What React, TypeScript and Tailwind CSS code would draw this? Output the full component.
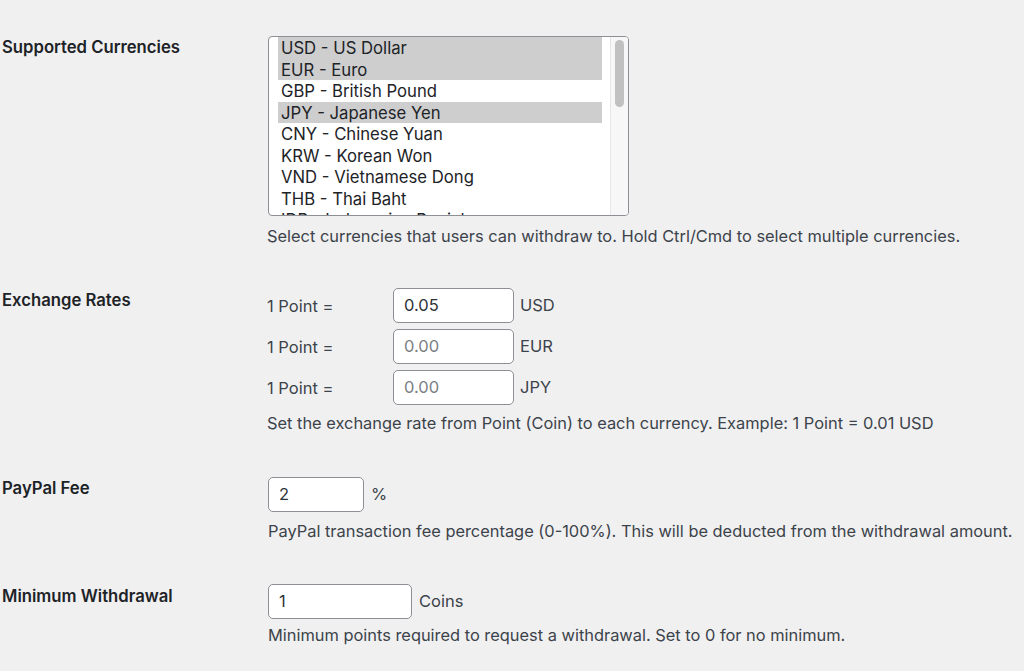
import React from "react";

const font = { fontFamily: "Inter, 'Noto Sans', sans-serif" };

const options: { label: string; selected: boolean }[] = [
  { label: "USD - US Dollar", selected: true },
  { label: "EUR - Euro", selected: true },
  { label: "GBP - British Pound", selected: false },
  { label: "JPY - Japanese Yen", selected: true },
  { label: "CNY - Chinese Yuan", selected: false },
  { label: "KRW - Korean Won", selected: false },
  { label: "VND - Vietnamese Dong", selected: false },
  { label: "THB - Thai Baht", selected: false },
  { label: "IDR - Indonesian Rupiah", selected: false },
];

function Label({ children, pt }: { children: React.ReactNode; pt: string }) {
  return (
    <div className={`w-[267px] shrink-0 pl-[2px] ${pt}`}>
      <div className="text-[16.7px] leading-[22px] font-semibold text-[#1d2327]">{children}</div>
    </div>
  );
}

function Desc({ children, mt }: { children: React.ReactNode; mt: string }) {
  return <p className={`${mt} text-[16.4px] leading-[20px] text-[#3c434a] whitespace-nowrap`}>{children}</p>;
}

function Input({ value, placeholder, w }: { value?: string; placeholder?: string; w: string }) {
  return (
    <div
      className={`${w} h-[35px] rounded-[5px] border border-[#8c8f94] bg-white px-[10px] flex items-center text-[16.5px] shrink-0`}
    >
      {value ? (
        <span className="text-[#2c3338]">{value}</span>
      ) : (
        <span className="text-[#7b7f84]">{placeholder}</span>
      )}
    </div>
  );
}

export default function App() {
  return (
    <div className="w-[1024px] h-[671px] bg-[#f0f0f1] overflow-hidden" style={font}>
      {/* Supported Currencies */}
      <div className="flex pt-[36px]">
        <Label pt="pt-0">Supported Currencies</Label>
        <div className="pl-[1px]">
          <div className="relative w-[361px] h-[180px] rounded-[4px] border border-[#8c8f94] bg-white overflow-hidden flex">
            <div className="flex-1 pl-[9px] pr-[8px] overflow-hidden">
              {options.map((o) => (
                <div
                  key={o.label}
                  className={`h-[21.5px] leading-[22.5px] pl-[3px] text-[16.7px] text-[#1d2327] whitespace-nowrap ${
                    o.selected ? "bg-[#cecece]" : ""
                  }`}
                >
                  {o.label}
                </div>
              ))}
            </div>
            <div className="w-[18px] h-full bg-[#f7f7f7] border-l border-[#e6e6e6] flex justify-center pt-[3px]">
              <div className="w-[9px] h-[67px] rounded-full bg-[#c1c1c1]" />
            </div>
          </div>
          <Desc mt="mt-[10px]">
            <span className="-ml-[1px]">
              Select currencies that users can withdraw to. Hold Ctrl/Cmd to select multiple currencies.
            </span>
          </Desc>
        </div>
      </div>

      {/* Exchange Rates */}
      <div className="flex pt-[42px]">
        <Label pt="pt-[1px]">Exchange Rates</Label>
        <div>
          <div className="flex flex-col gap-[6px]">
            {[
              { v: "0.05", c: "USD" },
              { v: "", c: "EUR" },
              { v: "", c: "JPY" },
            ].map((r) => (
              <div key={r.c} className="flex items-center">
                <span className="w-[126px] pt-[2px] text-[16.5px] text-[#3c434a]">1 Point =</span>
                <Input value={r.v} placeholder="0.00" w="w-[121px]" />
                <span className="ml-[6px] text-[16.5px] text-[#3c434a]">{r.c}</span>
              </div>
            ))}
          </div>
          <Desc mt="mt-[8px]">
            Set the exchange rate from Point (Coin) to each currency. Example: 1 Point = 0.01 USD
          </Desc>
        </div>
      </div>

      {/* PayPal Fee */}
      <div className="flex pt-[44px]">
        <Label pt="pt-0">PayPal Fee</Label>
        <div className="pl-[1px]">
          <div className="flex items-center">
            <Input value="2" w="w-[96px]" />
            <span className="ml-[7px] text-[16.5px] text-[#3c434a]">%</span>
          </div>
          <Desc mt="mt-[9px]">
            PayPal transaction fee percentage (0-100%). This will be deducted from the withdrawal amount.
          </Desc>
        </div>
      </div>

      {/* Minimum Withdrawal */}
      <div className="flex pt-[43px]">
        <Label pt="pt-[1px]">Minimum Withdrawal</Label>
        <div className="pl-[1px]">
          <div className="flex items-center">
            <Input value="1" w="w-[144px]" />
            <span className="ml-[7px] text-[16.5px] text-[#3c434a]">Coins</span>
          </div>
          <Desc mt="mt-[6px]">
            Minimum points required to request a withdrawal. Set to 0 for no minimum.
          </Desc>
        </div>
      </div>
    </div>
  );
}
